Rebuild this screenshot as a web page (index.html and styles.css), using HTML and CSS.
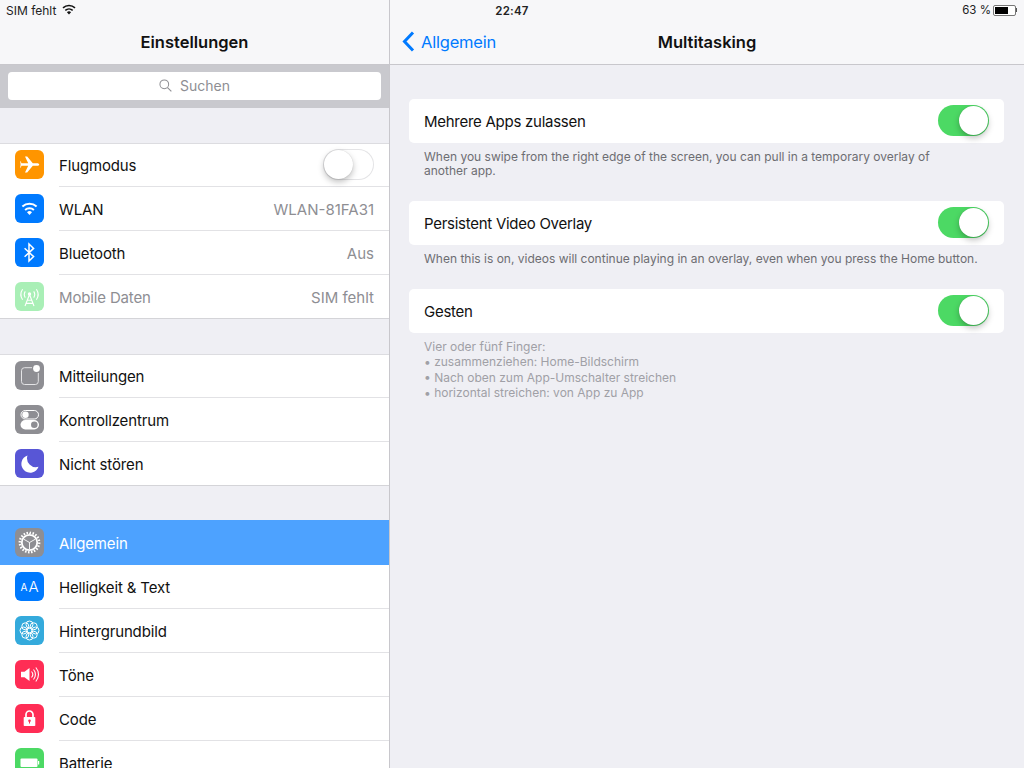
FILE: index.html
```html
<!DOCTYPE html>
<html>
<head>
<meta name="viewport" content="width=device-width, initial-scale=1">
<link rel="stylesheet" href="styles.css">
</head>
<body>

<!-- status bar sits over both nav bars -->
<div class="statusbar">
  <div class="status-left">
    <span>SIM fehlt</span>
    <svg class="status-wifi" viewBox="0 0 14 11"><path d="M7 10.6 4.9 8.2a3 3 0 0 1 4.2 0z" fill="#111"/><path d="M3.3 6.4a5.4 5.4 0 0 1 7.4 0M1 3.9a8.6 8.6 0 0 1 12 0" fill="none" stroke="#111" stroke-width="1.5"/></svg>
  </div>
  <div class="status-time">22:47</div>
  <div class="status-right">
    <span>63 %</span>
    <span class="battery"><span class="battery-level"></span></span>
    <span class="battery-tip"></span>
  </div>
</div>

<div class="app">
  <div class="sidebar">
    <div class="navbar"><span class="nav-title">Einstellungen</span></div>

    <div class="searchband">
      <div class="searchfield">
        <svg class="search-icon" viewBox="0 0 14 14"><circle cx="5.7" cy="5.7" r="4.7" fill="none" stroke="#8e8e93" stroke-width="1.1"/><path d="M9.2 9.2 13.3 13.3" stroke="#8e8e93" stroke-width="1.2"/></svg>
        <span>Suchen</span>
      </div>
    </div>

    <ul class="group">
      <li>
        <span class="icon orange">
          <svg viewBox="0 0 29 29"><path d="M7.500 13.200h5.700L10 6.600h2.200l5.600 6.600h4.200c1.400 0 2.200.6 2.200 1.300s-.8 1.300-2.200 1.300h-4.200l-5.600 6.600H10l3.200-6.600H7.500l-1-.1-.8 2h-.5l.4-3.200-.4-3.200h.5l.8 2z" fill="#fff"/></svg>
        </span>
        <span class="label">Flugmodus</span>
        <span class="toggle off"><span class="knob"></span></span>
      </li>
      <li>
        <span class="icon blue">
          <svg viewBox="0 0 29 29"><path d="M14.5 21 12 18.2a3.500 3.500 0 0 1 5 0z" fill="#fff"/><path d="M10.100 15.900a6.500 6.500 0 0 1 8.800 0M7.400 12.600a10.600 10.600 0 0 1 14.200 0" fill="none" stroke="#fff" stroke-width="2"/></svg>
        </span>
        <span class="label">WLAN</span>
        <span class="value">WLAN-81FA31</span>
      </li>
      <li>
        <span class="icon blue">
          <svg viewBox="0 0 29 29"><path d="M9.600 10.200 18.600 18.600 14 23V6l4.600 4.400-9 8.400" fill="none" stroke="#fff" stroke-width="1.500"/></svg>
        </span>
        <span class="label">Bluetooth</span>
        <span class="value">Aus</span>
      </li>
      <li>
        <span class="icon green-light">
          <svg viewBox="0 0 29 29"><g fill="none" stroke="#fff" stroke-width="1.100"><path d="M10.300 9.400a5.500 5.500 0 0 0 0 6.200M18.700 9.400a5.500 5.500 0 0 1 0 6.200M7.600 7.200a9.500 9.500 0 0 0 0 10.600M21.400 7.200a9.500 9.500 0 0 1 0 10.600"/><path d="M14.500 12.500 10 24M14.500 12.500 19 24M12.300 18.200h4.400M11 21.400h7"/></g><circle cx="14.500" cy="12" r="1.700" fill="#fff"/></svg>
        </span>
        <span class="label dim">Mobile Daten</span>
        <span class="value">SIM fehlt</span>
      </li>
    </ul>

    <ul class="group">
      <li>
        <span class="icon gray">
          <svg viewBox="0 0 29 29"><path d="M17 6.700H9.500a3 3 0 0 0-3 3v10.800a3 3 0 0 0 3 3h10.800a3 3 0 0 0 3-3V12" fill="none" stroke="#e4e4e6" stroke-width="1"/><circle cx="21.500" cy="7.500" r="3.400" fill="#fff"/></svg>
        </span>
        <span class="label">Mitteilungen</span>
      </li>
      <li>
        <span class="icon gray">
          <svg viewBox="0 0 29 29"><rect x="6" y="5.500" width="17.500" height="8.500" rx="4.250" fill="none" stroke="#fff" stroke-width="1"/><circle cx="10.500" cy="9.750" r="3.200" fill="#fff"/><rect x="5.500" y="15" width="18.500" height="9.500" rx="4.750" fill="#fff"/><circle cx="19.300" cy="19.750" r="3.300" fill="#8e8e93"/></svg>
        </span>
        <span class="label">Kontrollzentrum</span>
      </li>
      <li>
        <span class="icon indigo">
          <svg viewBox="0 0 29 29"><path d="M12.500 6.500a8.800 8.800 0 1 0 11 11.300 8.900 8.900 0 0 1-11-11.300z" fill="#fff"/></svg>
        </span>
        <span class="label">Nicht stören</span>
      </li>
    </ul>

    <ul class="group">
      <li class="selected">
        <span class="icon gray">
          <svg viewBox="0 0 29 29"><circle cx="14.500" cy="14.500" r="9.700" fill="none" stroke="#fff" stroke-width="2.400" pathLength="40" stroke-dasharray="1 1"/><circle cx="14.500" cy="14.500" r="7.700" fill="none" stroke="#fff" stroke-width="1.800"/><path d="M14.500 14.500V21M14.500 14.500 8.900 11.300M14.500 14.500l5.600-3.200" stroke="#fff" stroke-width=".9"/></svg>
        </span>
        <span class="label">Allgemein</span>
      </li>
      <li>
        <span class="icon blue">
          <svg viewBox="0 0 29 29"><text class="aa-small" x="5.500" y="18.500">A</text><text class="aa-big" x="13.500" y="19.500">A</text></svg>
        </span>
        <span class="label">Helligkeit &amp; Text</span>
      </li>
      <li>
        <span class="icon teal">
          <svg viewBox="0 0 29 29"><g fill="none" stroke="#fff" stroke-width="1"><circle cx="14.500" cy="14.500" r="2.500"/><circle cx="14.500" cy="8.500" r="3.500"/><circle cx="14.500" cy="20.500" r="3.500"/><circle cx="8.500" cy="14.500" r="3.500"/><circle cx="20.500" cy="14.500" r="3.500"/><circle cx="10.300" cy="10.300" r="3.500"/><circle cx="18.700" cy="10.300" r="3.500"/><circle cx="10.300" cy="18.700" r="3.500"/><circle cx="18.700" cy="18.700" r="3.500"/></g></svg>
        </span>
        <span class="label">Hintergrundbild</span>
      </li>
      <li>
        <span class="icon pink">
          <svg viewBox="0 0 29 29"><path d="M6 11.800h3.500L14.500 8v13l-5-3.800H6z" fill="#fff"/><path d="M16.500 11.500a4.500 4.500 0 0 1 0 6M18.500 9.500a7.500 7.500 0 0 1 0 10M20.800 7.500a10.500 10.500 0 0 1 0 14" fill="none" stroke="#fff" stroke-width="1.100"/></svg>
        </span>
        <span class="label">Töne</span>
      </li>
      <li>
        <span class="icon pink">
          <svg viewBox="0 0 29 29"><path d="M11 13V10.500a3.500 3.500 0 0 1 7 0V13" fill="none" stroke="#fff" stroke-width="1.700"/><rect x="8.700" y="13" width="11.600" height="9" rx=".8" fill="#fff"/><circle cx="14.500" cy="16.800" r="1.300" fill="#ff2d55"/><path d="M14 17h1v2.500h-1z" fill="#ff2d55"/></svg>
        </span>
        <span class="label">Code</span>
      </li>
      <li>
        <span class="icon green">
          <svg viewBox="0 0 29 29"><rect x="5.500" y="10.500" width="17" height="8.500" rx="1" fill="#fff"/><rect x="23" y="13" width="1.200" height="3.500" fill="#fff"/></svg>
        </span>
        <span class="label">Batterie</span>
      </li>
    </ul>
  </div>

  <div class="detail">
    <div class="navbar">
      <a class="back">
        <svg class="back-chevron" viewBox="0 0 13 21"><path d="M11 1.500 2.500 10.500 11 19.500" fill="none" stroke="#007aff" stroke-width="3"/></svg>
        Allgemein
      </a>
      <span class="nav-title">Multitasking</span>
    </div>

    <div class="content">
      <div class="card">
        <span class="label">Mehrere Apps zulassen</span>
        <span class="toggle"><span class="knob"></span></span>
      </div>
      <p class="note">When you swipe from the right edge of the screen, you can pull in a temporary overlay of<br>another app.</p>

      <div class="card">
        <span class="label">Persistent Video Overlay</span>
        <span class="toggle"><span class="knob"></span></span>
      </div>
      <p class="note">When this is on, videos will continue playing in an overlay, even when you press the Home button.</p>

      <div class="card">
        <span class="label">Gesten</span>
        <span class="toggle"><span class="knob"></span></span>
      </div>
      <p class="note light">Vier oder fünf Finger:<br>• zusammenziehen: Home-Bildschirm<br>• Nach oben zum App-Umschalter streichen<br>• horizontal streichen: von App zu App</p>
    </div>
  </div>
</div>

</body>
</html>
```

FILE: styles.css
```css
* {
  box-sizing: border-box;
}

html, body {
  height: 100%;
}

body {
  margin: 0;
  overflow: hidden;
  background: #efeff4;
  color: #111;
  font-family: Inter, "Liberation Sans", sans-serif;
  font-size: 15px;
}

ul {
  margin: 0;
  padding: 0;
  list-style: none;
}

/* Status bar */
.statusbar {
  position: absolute;
  z-index: 2;
  top: 0;
  left: 0;
  width: 1024px;
  height: 20px;
  padding: 0 6px;
  display: grid;
  grid-template-columns: 1fr auto 1fr;
  align-items: center;
  font-size: 12px;
  color: #222;
}

.status-left {
  display: flex;
  align-items: center;
  gap: 6px;
}

.status-wifi {
  width: 14px;
  height: 11px;
  margin-top: -2px;
}

.status-time {
  margin-top: 1px;
  font-size: 11.5px;
  font-weight: 600;
  letter-spacing: .2px;
}

.status-right {
  display: flex;
  align-items: center;
  justify-content: flex-end;
  font-size: 11.5px;
}

.battery {
  width: 23px;
  height: 11px;
  margin-left: 2px;
  padding: 1px;
  border: 1px solid #777;
  border-radius: 2px;
  background: #fff;
}

.battery-level {
  display: block;
  width: 13px;
  height: 7px;
  background: #000;
}

.battery-tip {
  width: 1px;
  height: 4px;
  margin-right: 1px;
  background: #555;
}

/* Two panes */
.app {
  display: flex;
  height: 768px;
}

.sidebar {
  width: 390px;
  height: 768px;
  overflow: hidden;
  flex: none;
  border-right: 1px solid #c8c7cc;
}

.detail {
  flex: 1;
}

.navbar {
  height: 65px;
  padding-top: 20px;
  display: flex;
  align-items: center;
  justify-content: center;
  position: relative;
  background: #f7f7f9;
  border-bottom: 1px solid #c8c7cc;
}

.nav-title {
  font-size: 16.5px;
  font-weight: 600;
  color: #111;
}

/* Back link lies on the nav bar, the title stays centered */
.back {
  position: absolute;
  left: 12px;
  top: 31px;
  display: flex;
  align-items: center;
  gap: 6px;
  font-size: 16.5px;
  letter-spacing: -.2px;
  color: #007aff;
}

.back-chevron {
  width: 13px;
  height: 21px;
}

/* Search */
.searchband {
  height: 43px;
  padding: 7px 8px 8px;
  background: #c9c9ce;
}

.searchfield {
  height: 28px;
  padding-bottom: 1px;
  display: flex;
  align-items: center;
  justify-content: center;
  gap: 8px;
  background: #fff;
  border-radius: 4px;
  font-size: 14px;
  color: #8e8e93;
}

.search-icon {
  width: 13px;
  height: 13px;
}

/* Settings list */
.group {
  margin-top: 35px;
  background: #fff;
  border-top: 1px solid #dcdce0;
  border-bottom: 1px solid #d4d4d8;
}

.group:last-child {
  margin-top: 34px;
  border-bottom: 0;
}

.group li {
  height: 44px;
  margin-left: 59px;
  padding-top: 2px;
  padding-right: 15px;
  display: flex;
  align-items: center;
  position: relative;
  border-bottom: 1px solid #e2e2e5;
}

.group li:first-child {
  height: 43px;
  padding-top: 0;
}

.group li:last-child {
  border-bottom: 0;
  height: 43px;
}

.group li.selected {
  margin-left: 0;
  padding-left: 59px;
  padding-top: 2px;
  height: 45px;
  margin-top: -1px;
  border-bottom: 0;
  background: #4da2ff;
  color: #fff;
}

.label {
  font-size: 15px;
  letter-spacing: -.15px;
}

.card .label {
  letter-spacing: -.27px;
}

.label.dim {
  color: #8e8e93;
}

.value {
  margin-left: auto;
  font-size: 15px;
  color: #8e8e93;
}

/* Setting icon, hangs in the margin left of the row */
.icon {
  position: absolute;
  left: -44px;
  top: 7px;
  width: 29px;
  height: 29px;
  border-radius: 6px;
}

.group li:first-child .icon {
  top: 6px;
}

.group li.selected .icon {
  left: 15px;
  top: 8px;
}

.icon svg {
  display: block;
  width: 29px;
  height: 29px;
}

.orange { background: #ff9500; }
.blue { background: #007aff; }
.green-light { background: #a9efb6; }
.green { background: #4cd964; }
.gray { background: #8e8e93; }
.indigo { background: #5856d6; }
.teal { background: #34aadc; }
.pink { background: #ff2d55; }

.aa-small,
.aa-big {
  fill: #fff;
  font-family: Inter, "Liberation Sans", sans-serif;
  font-weight: 400;
}

.aa-small { font-size: 10px; }
.aa-big { font-size: 15px; font-weight: 300; }

/* Switch */
.toggle {
  margin-left: auto;
  margin-top: -1px;
  width: 51px;
  height: 31px;
  padding: 1px;
  flex: none;
  display: flex;
  justify-content: flex-end;
  background: #4cd964;
  border-radius: 16px;
}

.toggle.off {
  justify-content: flex-start;
  background: #fff;
  box-shadow: inset 0 0 0 1px #e4e4e6;
}

.knob {
  width: 29px;
  height: 29px;
  background: #fff;
  border-radius: 50%;
  box-shadow: 0 3px 6px rgba(0,0,0,.25), 0 0 1px rgba(0,0,0,.2);
}

/* Detail pane */
.content {
  padding: 34px 20px 0 19px;
}

.card {
  height: 44px;
  padding: 0 15px;
  display: flex;
  align-items: center;
  background: #fff;
  border-radius: 5px;
}

.note {
  margin: 7px 0 23px;
  padding: 0 15px;
  font-size: 12px;
  line-height: 14px;
  color: #6d6d72;
}

.note.light {
  margin-top: 6px;
  line-height: 15.3px;
  color: #a0a0a6;
}
```
